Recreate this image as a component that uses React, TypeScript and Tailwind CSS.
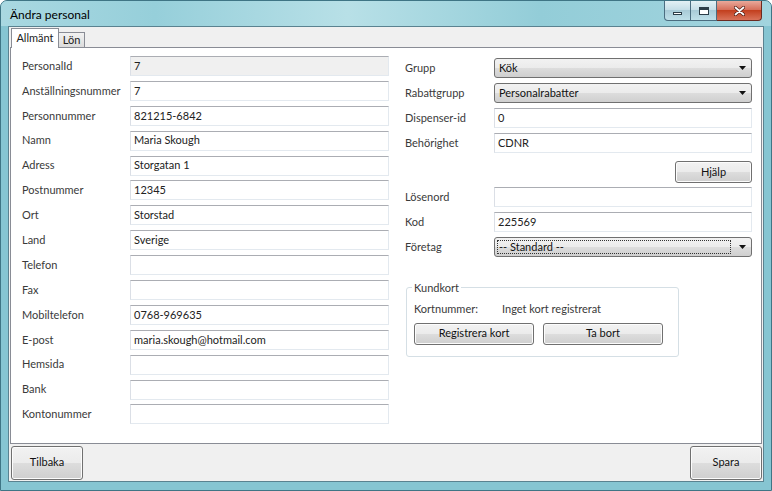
import React from 'react';

const leftRows: [string, string, boolean?][] = [
  ['PersonalId', '7', true],
  ['Anställningsnummer', '7'],
  ['Personnummer', '821215-6842'],
  ['Namn', 'Maria Skough'],
  ['Adress', 'Storgatan 1'],
  ['Postnummer', '12345'],
  ['Ort', 'Storstad'],
  ['Land', 'Sverige'],
  ['Telefon', ''],
  ['Fax', ''],
  ['Mobiltelefon', '0768-969635'],
  ['E-post', 'maria.skough@hotmail.com'],
  ['Hemsida', ''],
  ['Bank', ''],
  ['Kontonummer', ''],
];

function TextBox({ value, disabled, width }: { value: string; disabled?: boolean; width: string }) {
  return (
    <div
      className={`${width} flex h-[20px] items-center border border-[#e3e9ef] border-t-[#abadb3] border-l-[#dbdfe6] px-[3px] text-[#222] ${
        disabled ? 'bg-[#f0f0f0]' : 'bg-white'
      }`}
    >
      {value}
    </div>
  );
}

function Arrow() {
  return (
    <svg width="7" height="4" viewBox="0 0 7 4" className="shrink-0">
      <path d="M0 0h7L3.5 4z" fill="#111" />
    </svg>
  );
}

function Combo({ value, focused }: { value: string; focused?: boolean }) {
  return (
    <div className="flex h-[20px] w-[258px] items-center rounded-[3px] border border-[#707070] bg-[linear-gradient(#f2f2f2_0%,#ebebeb_50%,#dddddd_50%,#cfcfcf_100%)] pr-[5px] text-[#111]">
      <div className="flex min-w-0 flex-1 items-center p-[2px]">
        <div
          className={`flex h-[14px] flex-1 items-center pl-[1px] ${
            focused ? 'border border-dotted border-[#333]' : 'border border-transparent'
          }`}
        >
          {value}
        </div>
      </div>
      <div className="ml-[6px]">
        <Arrow />
      </div>
    </div>
  );
}

function Button({ children, className }: { children: React.ReactNode; className: string }) {
  return (
    <div
      className={`${className} flex items-center justify-center rounded-[3px] border border-[#707070] bg-[linear-gradient(#f2f2f2_0%,#ebebeb_50%,#dddddd_50%,#cfcfcf_100%)] text-[#111] shadow-[inset_0_0_0_1px_#fcfcfc]`}
    >
      {children}
    </div>
  );
}

function Row({ label, children, labelWidth }: { label: string; children: React.ReactNode; labelWidth: string }) {
  return (
    <div className="flex h-[20px] items-center">
      <div className={`${labelWidth} shrink-0 text-[#3a3a3a]`}>{label}</div>
      {children}
    </div>
  );
}

export default function App() {
  return (
    <div
      className="flex h-[491px] w-[772px] flex-col overflow-hidden rounded-t-[7px] border border-[#3f7585] bg-[#86c5d2] text-[11px]"
      style={{ fontFamily: 'Lato, "Open Sans", sans-serif' }}
    >
      {/* title bar */}
      <div className="flex h-[25px] shrink-0 items-start justify-between bg-[linear-gradient(90deg,#a9d8e1,#96cfda_20%,#b8e0e7_45%,#93cdd8_70%,#a2d4de)] pl-[9px] pr-[9px]">
        <div className="pt-[5px] text-[12px] text-black">Ändra personal</div>
        <div className="flex h-[20px]">
          <div className="flex w-[27px] items-center justify-center rounded-bl-[4px] border border-t-0 border-[#4b6d80] bg-[linear-gradient(#e4f1f5,#c3dde6_50%,#a9cbd7_50%,#bfe0e9)]">
            <div className="mt-[5px] h-[3px] w-[9px] border border-[#2c3d48] bg-white" />
          </div>
          <div className="flex w-[26px] items-center justify-center border border-l-0 border-t-0 border-[#4b6d80] bg-[linear-gradient(#e4f1f5,#c3dde6_50%,#a9cbd7_50%,#bfe0e9)]">
            <div className="h-[8px] w-[10px] border border-[#2c3d48] border-t-[3px] bg-white" />
          </div>
          <div className="flex w-[45px] items-center justify-center rounded-br-[4px] border border-l-0 border-t-0 border-[#6b2a20] bg-[linear-gradient(#e9a99b,#d46a55_50%,#c3401f_50%,#d9735a)]">
            <svg width="11" height="10" viewBox="0 0 11 10">
              <path d="M1.5 1.5l8 7M9.5 1.5l-8 7" stroke="#4a1a12" strokeWidth="3.2" strokeLinecap="round" />
              <path d="M1.5 1.5l8 7M9.5 1.5l-8 7" stroke="#fff" strokeWidth="1.8" strokeLinecap="round" />
            </svg>
          </div>
        </div>
      </div>

      {/* client */}
      <div className="mx-[7px] flex flex-1 flex-col border border-[#5a8290] bg-[#f0f0f0]">
        {/* tabs */}
        <div className="flex h-[20px] shrink-0 items-end pl-[2px]">
          <div className="relative z-10 -mb-px flex h-[20px] w-[48px] items-center justify-center border border-b-0 border-[#898c95] bg-white pb-[1px] text-[#222]">
            Allmänt
          </div>
          <div className="flex h-[15px] w-[26px] items-center justify-center border border-b-0 border-l-0 border-[#898c95] bg-[linear-gradient(#f2f2f2,#dcdcdc)] text-[#222]">
            Lön
          </div>
        </div>

        {/* panel */}
        <div className="ml-[1px] mr-[1px] flex h-[397px] shrink-0 gap-[16px] border border-[#898c95] bg-white pl-[11px]">
          <div className="flex flex-col gap-[4.9px] pt-[8px]">
            {leftRows.map(([label, value, disabled]) => (
              <Row key={label} label={label} labelWidth="w-[108px]">
                <TextBox value={value} disabled={disabled} width="w-[259px]" />
              </Row>
            ))}
          </div>

          <div className="flex flex-col gap-[5px] pt-[10px]">
            <Row label="Grupp" labelWidth="w-[89px]">
              <Combo value="Kök" />
            </Row>
            <Row label="Rabattgrupp" labelWidth="w-[89px]">
              <Combo value="Personalrabatter" />
            </Row>
            <Row label="Dispenser-id" labelWidth="w-[89px]">
              <TextBox value="0" width="w-[258px]" />
            </Row>
            <Row label="Behörighet" labelWidth="w-[89px]">
              <TextBox value="CDNR" width="w-[258px]" />
            </Row>
            <div className="flex h-[24px] justify-end pt-[3px]">
              <Button className="h-[22px] w-[77px]">Hjälp</Button>
            </div>
            <Row label="Lösenord" labelWidth="w-[89px]">
              <TextBox value="" width="w-[258px]" />
            </Row>
            <Row label="Kod" labelWidth="w-[89px]">
              <TextBox value="225569" width="w-[258px]" />
            </Row>
            <Row label="Företag" labelWidth="w-[89px]">
              <Combo value="-- Standard --" focused />
            </Row>

            <div className="relative ml-[1px] mt-[25px] h-[70px] w-[273px] rounded-[3px] border border-[#d5dfe5] px-[7px]">
              <div className="absolute -top-[8px] left-[5px] bg-white px-[2px] leading-[15px] text-[#3a3a3a]">Kundkort</div>
              <div className="flex pt-[13px] text-[#3a3a3a]">
                <div className="w-[88px]">Kortnummer:</div>
                <div>Inget kort registrerat</div>
              </div>
              <div className="mt-[5px] flex gap-[9px]">
                <Button className="h-[22px] w-[120px]">Registrera kort</Button>
                <Button className="h-[22px] w-[120px]">Ta bort</Button>
              </div>
            </div>
          </div>
        </div>

        {/* bottom bar */}
        <div className="flex flex-1 items-center justify-between pl-[2px] pr-[1px]">
          <Button className="h-[34px] w-[72px]">Tilbaka</Button>
          <Button className="h-[34px] w-[72px]">Spara</Button>
        </div>
      </div>
      <div className="h-[8px] shrink-0" />
    </div>
  );
}
